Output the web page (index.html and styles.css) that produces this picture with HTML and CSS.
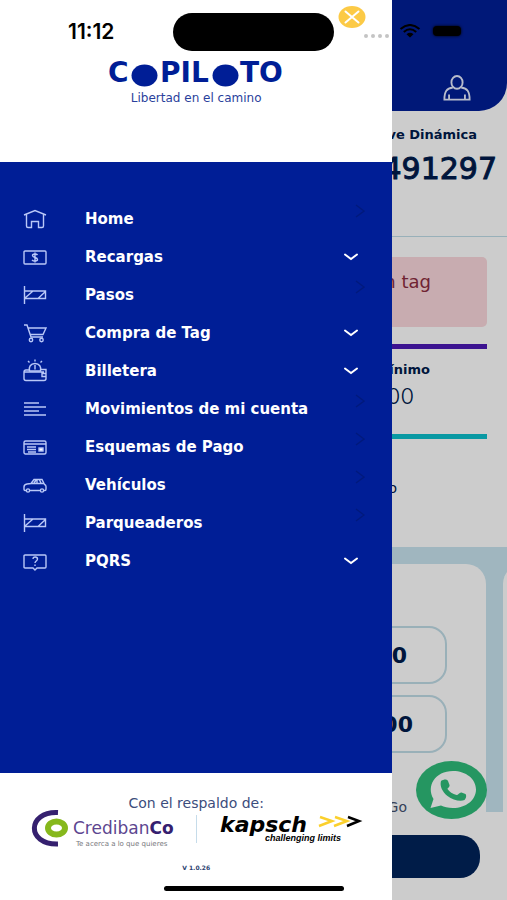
FILE: index.html
```html
<!DOCTYPE html>
<html lang="es">
<head>
<meta charset="utf-8">
<meta name="viewport" content="width=device-width, initial-scale=1">
<title>Copiloto</title>
<link rel="stylesheet" href="styles.css">
</head>
<body>
<svg class="sprite" aria-hidden="true">
  <symbol id="barrier" viewBox="0 0 24 20"><path d="M1.500 1v18M1.500 6h21v7.500h-21M2 13l8-7M15 13.500l7.500-7"/></symbol>
  <symbol id="down" viewBox="0 0 14 8"><path d="M1 1.500l6 4.500 6-4.500"/></symbol>
  <symbol id="right" viewBox="0 0 10 14"><path d="M1 1l8 6-8 6"/></symbol>
</svg>

<main class="page">
  <header class="top">
    <div class="signals">
      <svg class="wifi" viewBox="0 0 22 14"><path d="M1.500 5Q11-3 20.500 5M4.800 8Q11 2.500 17.200 8"/><path class="solid" d="M7.500 10.200Q11 7.500 14.500 10.200L11 13.500z"/></svg>
      <span class="battery"></span>
    </div>
    <a class="profile" href="#perfil" aria-label="Perfil">
      <svg viewBox="0 0 30 28"><ellipse cx="15" cy="8" rx="6" ry="6.800"/><path d="M10.500 13.500C4 14.500 1.500 17.500 1.500 26.500h27c0-9-2.500-12-9-13M6.500 26v-5M23.500 26v-5"/></svg>
    </a>
  </header>
  <section class="key">
    <h2>Clave Dinámica</h2>
    <p>491297</p>
  </section>
  <section class="account">
    <p class="alert">Sin tag</p>
    <div class="minimum"><h3>Mínimo</h3><p>00</p></div>
    <div class="saldo">Saldo</div>
  </section>
  <section class="band">
    <div class="card">
      <button class="amount" type="button">00</button>
      <button class="amount wide" type="button">000</button>
      <p class="pay">Go</p>
    </div>
    <div class="card"></div>
  </section>
  <button class="submit" type="button" aria-label="Pagar"></button>
  <a class="whatsapp" href="#whatsapp" aria-label="WhatsApp">
    <svg viewBox="0 0 71 58"><ellipse class="green" cx="35.500" cy="29" rx="35.500" ry="29"/><path class="bubble" d="M14.500 47l3-9C10 25 19 10 37 10c13 0 23 8 23 18.500S50 47 37 47c-5 0-9-1-12-2.500z"/><path class="green" d="M25 20c3-2 6-2 7 0l1.500 4c.5 2-2 3-2 4 2 3 5 5 9 6 2 0 3-3 5-2.500l4 1.500c1 1 1 4-1 6-4 2-12 0-17-4-5-4-8-10-6.500-15z"/></svg>
  </a>
</main>

<div class="scrim"></div>

<aside class="drawer">
  <header class="brand">
    <div class="status">
      <time>11:12</time>
      <span class="island"></span>
      <span class="dots"><i></i><i></i><i></i><i></i></span>
    </div>
    <button class="close" type="button" aria-label="Cerrar menú"><svg viewBox="0 0 28 22"><ellipse cx="14" cy="11" rx="13.500" ry="11"/><path d="M7.500 5.500l13 11M20.500 5.500l-13 11"/></svg></button>
    <svg class="logo" viewBox="0 0 180 28" role="img" aria-label="Copiloto">
      <text x="2" y="22">C</text><ellipse cx="38.500" cy="15.500" rx="13" ry="11"/>
      <text x="54" y="22">PIL</text><ellipse cx="119.500" cy="15.500" rx="13" ry="11"/>
      <text x="134" y="22">TO</text>
    </svg>
    <p class="tagline">Libertad en el camino</p>
  </header>

  <nav class="menu">
    <ul>
      <li><a href="#home"><svg class="icon" viewBox="0 0 24 20"><path d="M1 6L12 1.500 23 6M3.500 5.500V17q0 1.500 1.500 1.500h3.500v-6h7v6H19q1.500 0 1.500-1.500V5.500"/></svg><span>Home</span><svg class="right"><use href="#right"/></svg></a></li>
      <li><button type="button"><svg class="icon" viewBox="0 0 24 20"><rect x="1" y="4" width="22" height="13" rx="1"/><path d="M14.500 8c-1-1.500-5-1.500-5 .5 0 2.500 5 1.500 5 4 0 2-4 2-5.500.5M12 5.500v10"/></svg><span>Recargas</span><svg class="down"><use href="#down"/></svg></button></li>
      <li><a href="#pasos"><svg class="icon"><use href="#barrier"/></svg><span>Pasos</span><svg class="right"><use href="#right"/></svg></a></li>
      <li><button type="button"><svg class="icon" viewBox="0 0 24 20"><path d="M1 2h3l4 12h12M5 5h18l-3 6.500H7"/><circle cx="8" cy="17" r="1.700"/><circle cx="18.500" cy="17" r="1.700"/></svg><span>Compra de Tag</span><svg class="down"><use href="#down"/></svg></button></li>
      <li><button type="button"><svg class="icon tall" viewBox="0 0 24 24"><path d="M6 11H3q-2 0-2 2v6.500q0 2 2 2h18q2 0 2-2V10.500h-5M1 13h20M23 14.500h-4v3h4M12 6v4.500"/><path d="M6.500 12c-1-4 1-7.500 5.500-7.500s6.500 3.500 5.500 7.500zM12 .5v2M5 2l1.500 1.500M19 2l-1.500 1.500"/></svg><span>Billetera</span><svg class="down"><use href="#down"/></svg></button></li>
      <li><a href="#movimientos"><svg class="icon" viewBox="0 0 24 20"><path d="M1 4h15M1 8h22M1 12h15M1 16h22"/></svg><span>Movimientos de mi cuenta</span><svg class="right"><use href="#right"/></svg></a></li>
      <li><a href="#esquemas"><svg class="icon" viewBox="0 0 24 20"><rect x="1" y="4" width="22" height="13" rx="1.500"/><path d="M1 7h22M4 10h9M4 12.500h9M5 15h8"/><rect class="fill" x="16" y="11" width="4" height="3"/></svg><span>Esquemas de Pago</span><svg class="right"><use href="#right"/></svg></a></li>
      <li><a href="#vehiculos"><svg class="icon" viewBox="0 0 24 20"><path d="M3 15.500H2q-1 0-1-1.500v-2q0-2.500 3-3l4-.5 3-4h8l2.500 5q1.500.5 1.500 2V14q0 1.500-1 1.500h-1M7 15.500h10M8 8.500h13M14 4.500v4M11 8l2-3M16.500 5l1.500 3"/><circle cx="5" cy="15.500" r="1.600"/><circle cx="19" cy="15.500" r="1.600"/></svg><span>Vehículos</span><svg class="right"><use href="#right"/></svg></a></li>
      <li><a href="#parqueaderos"><svg class="icon"><use href="#barrier"/></svg><span>Parqueaderos</span><svg class="right"><use href="#right"/></svg></a></li>
      <li><button type="button"><svg class="icon" viewBox="0 0 24 20"><path d="M2 4h20q1 0 1 1v11q0 1-1 1h-8l-2 2-2-2H2q-1 0-1-1V5q0-1 1-1zM10 8c0-3 4.500-2.500 4.500 0 0 2-2.500 2-2.500 4M12 13.500v1.500"/></svg><span>PQRS</span><svg class="down"><use href="#down"/></svg></button></li>
    </ul>
  </nav>

  <footer class="backers">
    <p>Con el respaldo de:</p>
    <div class="logos">
      <svg class="crediban" viewBox="0 0 142 40" role="img" aria-label="CredibanCo, te acerca a lo que quieres">
        <path class="arc" d="M25 3.500C-6 2-7 36 25 35"/><ellipse class="ring" cx="23.500" cy="19" rx="8.500" ry="6.500"/>
        <text class="name" x="40" y="25">Crediban<tspan>Co</tspan></text>
        <text class="motto" x="43" y="37">Te acerca a lo que quieres</text>
      </svg>
      <span class="rule"></span>
      <svg class="kapsch" viewBox="0 0 142 40" role="img" aria-label="kapsch, challenging limits">
        <text class="name" x="2" y="23">kapsch</text>
        <path class="gold" d="M102 8l12 4-13 5M117 8l12 4-13 5"/><path class="dark" d="M130 8l11 4-12 5"/>
        <text class="motto" x="47" y="32">challenging limits</text>
      </svg>
    </div>
    <small>V 1.0.26</small>
  </footer>
</aside>
<div class="home-bar"></div>
</body>
</html>
```

FILE: styles.css
```css
* { box-sizing: border-box; }
body {
  margin: 0;
  position: relative;
  min-height: 100vh;
  overflow-x: hidden;
  background: #fff;
  color: #001b4c;
  font-family: "DejaVu Sans", sans-serif;
}
h2, h3, p, ul { margin: 0; padding: 0; }
ul { list-style: none; }
button { border: 0; padding: 0; background: none; font: inherit; color: inherit; }
a { color: inherit; text-decoration: none; }
svg { display: block; fill: none; }
.sprite { position: absolute; width: 0; height: 0; }

/* Page behind the drawer */
.page { text-align: right; position: relative; min-height: 100vh; }
.top {
  height: 111px;
  padding: 24px 36px 0 0;
  display: flex;
  flex-direction: column;
  align-items: flex-end;
  gap: 36px;
  background: #001e96;
  border-radius: 0 0 28px 0;
}
.signals { display: flex; align-items: center; gap: 12px; padding-right: 10px; }
.wifi { width: 22px; height: 14px; stroke: #000; stroke-width: 2; }
.wifi .solid { fill: #000; stroke: none; }
.battery { width: 28px; height: 10px; border-radius: 4px; background: #000; box-shadow: 0 0 3px #000; }
.profile svg { width: 28px; height: 28px; stroke: #e6ecff; stroke-width: 2; }
.key { height: 126px; padding: 16px 10px 0 0; border-bottom: 1px solid #bfdce8; }
.key h2 { font-size: 13px; line-height: 16px; padding-right: 20px; }
.key p { font-size: 30px; line-height: 36px; padding-top: 8px; -webkit-text-stroke: 1px #001b4c; }
.account { padding: 20px 20px 0; }
.alert {
  height: 70px;
  padding: 14px 56px 0 0;
  border-radius: 5px;
  background: #fad8dc;
  color: #8c2c40;
  font-size: 18px;
  line-height: 22px;
}
.minimum { margin-top: 17px; height: 90px; padding: 12px 57px 0 0; border-top: 5px solid #4c18b4; }
.minimum h3 { font-size: 13px; line-height: 18px; }
.minimum p { font: 300 22px/34px Inter, sans-serif; padding-right: 16px; }
.saldo { height: 113px; padding: 39px 90px 0 0; border-top: 5px solid #0cc0cc; font-size: 14px; line-height: 20px; }
.band { display: flex; gap: 17px; padding: 17px 0 0 20px; overflow: hidden; background: #c8e4ef; }
.card {
  flex: 0 0 calc(100% - 21px);
  height: 248px;
  padding: 62px 39px 0 20px;
  border-radius: 20px 20px 0 0;
  background: #fff;
}
.amount {
  display: block;
  width: 100%;
  height: 58px;
  margin-bottom: 11px;
  padding-right: 38px;
  border: 2px solid #c0dce7;
  border-radius: 18px;
  text-align: right;
  font-weight: 700;
  font-size: 22px;
}
.wide { padding-right: 32px; }
.pay { padding: 33px 40px 0 0; font-size: 14px; line-height: 20px; color: #43506e; }
.submit { display: block; width: calc(100% - 54px); height: 43px; margin: 23px 27px 22px; border-radius: 20px; background: #00245a; }
.whatsapp { position: absolute; right: 20px; bottom: 81px; }
.whatsapp svg { width: 71px; height: 58px; }
.whatsapp .green { fill: #2fbc7a; }
.whatsapp .bubble { fill: #fff; }
.scrim { position: absolute; inset: 0; background: rgba(0, 0, 0, .2); }

/* Drawer */
.drawer {
  position: absolute;
  top: 0;
  bottom: 0;
  left: 0;
  width: 77.4%;
  display: flex;
  flex-direction: column;
  background: #fff;
}
.brand { height: 162px; padding-top: 13px; text-align: center; }
.status { display: flex; align-items: center; height: 38px; padding: 0 3px 0 68px; }
.status time { width: 105px; text-align: left; color: #000; font: 600 21px/38px Inter, sans-serif; }
.island { width: 161px; height: 38px; border-radius: 24px; background: #000; }
.dots { display: flex; gap: 3px; margin: 8px 0 0 auto; }
.dots i { width: 4px; height: 4px; border-radius: 50%; background: #c4c4c4; }
.close { position: absolute; top: 6px; right: 26px; }
.close svg { width: 28px; height: 22px; fill: #fcca46; }
.close path { stroke: #fff; stroke-width: 2; stroke-linecap: round; }
.logo { width: 180px; height: 28px; margin: 9px auto 0; fill: #001e96; overflow: visible; }
.logo text { font: 700 28px "DejaVu Sans", sans-serif; }
.tagline { margin-top: 2px; font-size: 12px; line-height: 16px; color: #2a3f9c; }

.menu { flex: 1; padding-top: 38px; background: #001e96; color: #fff; }
.menu a, .menu button {
  width: 100%;
  height: 38px;
  padding: 0 27px 0 23px;
  display: grid;
  grid-template-columns: 24px 1fr auto;
  column-gap: 38px;
  align-items: center;
  text-align: left;
  font-weight: 700;
  font-size: 15px;
  line-height: 20px;
}
.icon { width: 24px; height: 20px; stroke: #b9c8f8; stroke-width: 1.4; }
.tall { height: 24px; }
.fill { fill: #fff; }
.down { width: 14px; height: 8px; margin-right: 7px; stroke: #fff; stroke-width: 2; stroke-linecap: round; }
.right { width: 10px; height: 14px; align-self: start; margin-top: 4px; stroke: #001a7c; stroke-width: 1.4; }

.backers { height: 127px; padding-top: 21px; text-align: center; }
.backers p { font-size: 14px; line-height: 18px; color: #3c4d7c; }
.logos { display: flex; justify-content: center; gap: 21px; height: 40px; margin-top: -3px; }
.crediban, .kapsch { width: 142px; height: 40px; overflow: visible; }
.rule { width: 1px; height: 28px; margin-top: 6px; background: #c6dcea; }
.arc { stroke: #35206f; stroke-width: 5; }
.ring { stroke: #86b81c; stroke-width: 6; }
.crediban .name { font-size: 17px; fill: #5d4690; }
.crediban tspan { font-weight: 700; fill: #35206f; }
.crediban .motto { font-size: 7px; fill: #77777c; }
.kapsch text { font-style: italic; font-weight: 700; fill: #000; }
.kapsch .name { font-size: 22px; }
.kapsch .motto { font-family: "Liberation Sans", sans-serif; font-size: 9px; }
.gold { stroke: #fbd02c; stroke-width: 2.5; }
.dark { stroke: #000; stroke-width: 2.5; }
.backers small { display: block; margin-top: 14px; font-weight: 700; font-size: 6px; line-height: 10px; color: #2c4270; }
.home-bar { position: absolute; left: 50%; bottom: 9px; width: 180px; height: 5px; margin-left: -90px; border-radius: 3px; background: #000; }
```
